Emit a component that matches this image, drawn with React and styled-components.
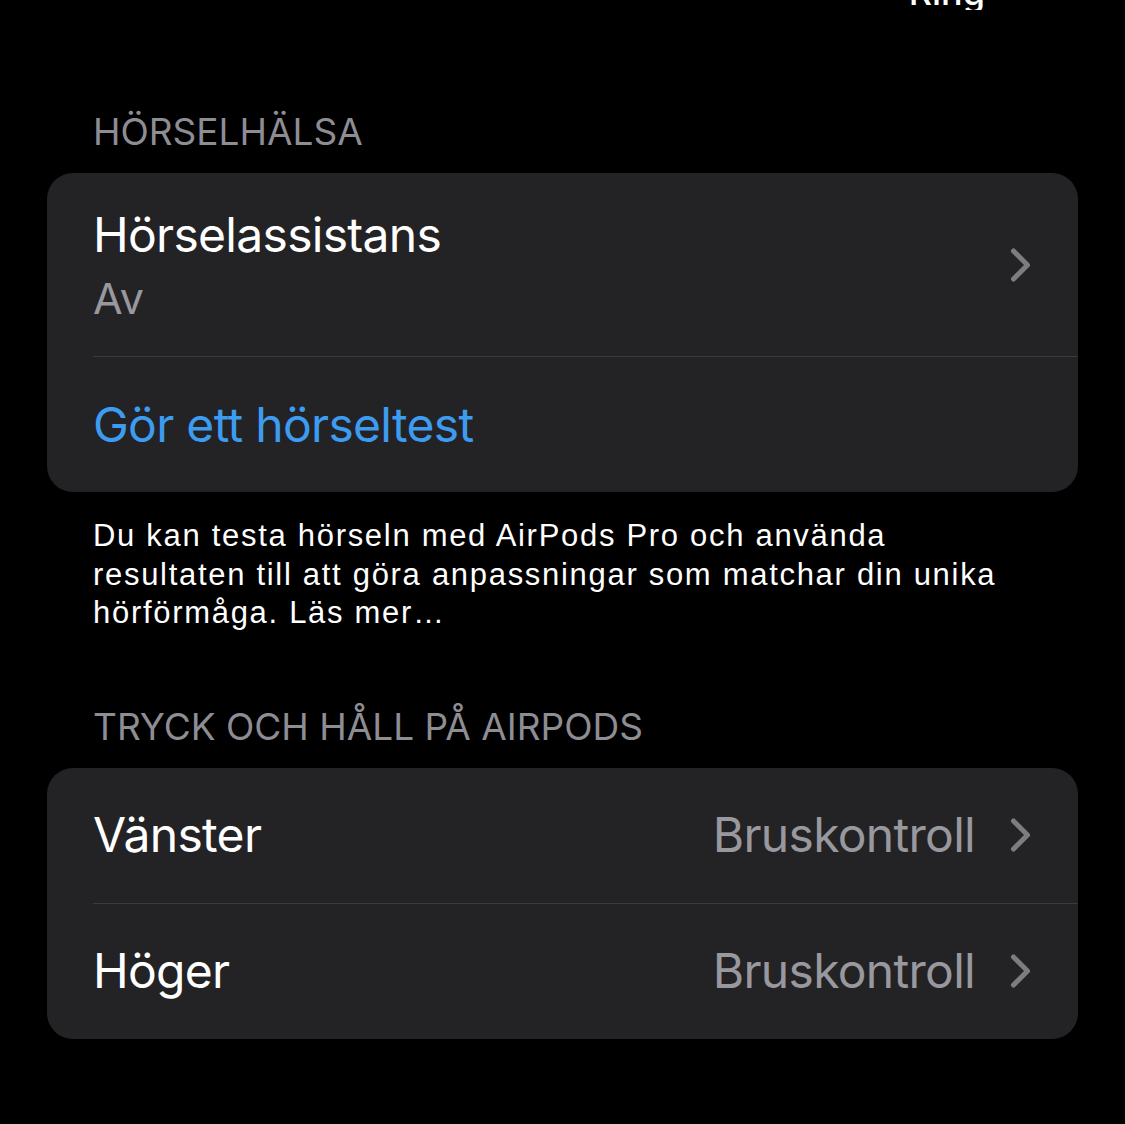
import React from "react";
import styled, { createGlobalStyle } from "styled-components";

const GlobalStyle = createGlobalStyle`
  html, body {
    margin: 0;
    padding: 0;
    background: #000;
  }
  body {
    font-family: Inter, "Noto Sans", sans-serif;
    color: #fff;
    -webkit-font-smoothing: antialiased;
  }
`;

const Screen = styled.div`
  width: 1125px;
  min-height: 1124px;
  background: #000;
  overflow: hidden;
  padding: 0 47px;
  box-sizing: border-box;
`;

// nav bar title is scrolled up, only its bottom edge shows
const NavBar = styled.div`
  height: 10px;
  display: flex;
  justify-content: flex-end;
  align-items: flex-end;
  padding-right: 93px;
  overflow: hidden;
`;

const NavTitle = styled.span`
  font-size: 36px;
  line-height: 36px;
  font-weight: 500;
  color: #fff;
  white-space: nowrap;
`;

const SectionHeader = styled.div`
  font-size: 37px;
  line-height: 48px;
  color: #8d8d93;
  text-transform: uppercase;
  padding: 0 46px;
  margin-top: ${(p) => p.$top}px;
  margin-bottom: 17px;
`;

const Card = styled.div`
  background: #232325;
  border-radius: 26px;
  overflow: hidden;
`;

const Row = styled.div`
  display: flex;
  align-items: center;
  justify-content: space-between;
  height: ${(p) => p.$height}px;
  padding: 0 47px 0 46px;
  box-sizing: border-box;
`;

const Divider = styled.div`
  height: 1px;
  margin-left: 46px;
  background: #3b3b3e;
`;

const TextStack = styled.div`
  display: flex;
  flex-direction: column;
  gap: 10px;
`;

const Title = styled.span`
  font-size: 48px;
  line-height: 56px;
  letter-spacing: -0.7px;
  color: ${(p) => (p.$link ? "#3d9bf0" : "#fff")};
  white-space: nowrap;
`;

const Subtitle = styled.span`
  font-size: 43px;
  line-height: 50px;
  color: #98989e;
`;

const Trailing = styled.div`
  display: flex;
  align-items: center;
  gap: 35px;
`;

const Value = styled.span`
  font-size: 48px;
  line-height: 56px;
  letter-spacing: -0.7px;
  color: #98989e;
`;

const Footer = styled.p`
  margin: 25px 0 0;
  padding: 0 46px;
  max-width: 930px;
  font-family: "Liberation Sans", Arial, sans-serif;
  font-size: 31px;
  line-height: 38.5px;
  letter-spacing: 1.7px;
  color: #fff;
`;

function Chevron() {
  return (
    <svg width="21" height="34" viewBox="0 0 21 34" fill="none">
      <path
        d="M3.5 3 L17.5 17 L3.5 31"
        stroke="#7c7c81"
        strokeWidth="5"
        strokeLinecap="round"
        strokeLinejoin="round"
      />
    </svg>
  );
}

function NavRow({ label, value }) {
  return (
    <Row $height={135}>
      <Title>{label}</Title>
      <Trailing>
        <Value>{value}</Value>
        <Chevron />
      </Trailing>
    </Row>
  );
}

export default function App() {
  return (
    <>
      <GlobalStyle />
      <Screen>
        <NavBar>
          <NavTitle>Ring</NavTitle>
        </NavBar>

        <SectionHeader $top={98}>Hörselhälsa</SectionHeader>
        <Card>
          <Row $height={183}>
            <TextStack>
              <Title>Hörselassistans</Title>
              <Subtitle>Av</Subtitle>
            </TextStack>
            <Chevron />
          </Row>
          <Divider />
          <Row $height={135}>
            <Title $link>Gör ett hörseltest</Title>
          </Row>
        </Card>
        <Footer>
          Du kan testa hörseln med AirPods Pro och använda resultaten till att
          göra anpassningar som matchar din unika hörförmåga. Läs mer…
        </Footer>

        <SectionHeader $top={70}>Tryck och håll på AirPods</SectionHeader>
        <Card>
          <NavRow label="Vänster" value="Bruskontroll" />
          <Divider />
          <NavRow label="Höger" value="Bruskontroll" />
        </Card>
      </Screen>
    </>
  );
}
